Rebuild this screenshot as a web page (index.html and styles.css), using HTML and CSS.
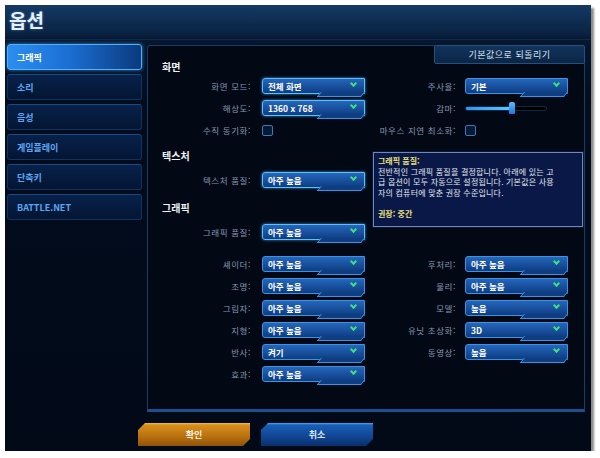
FILE: index.html
```html
<!DOCTYPE html>
<html lang="ko">
<head>
    <meta charset="UTF-8">
    <meta name="viewport" content="width=device-width, initial-scale=1.0">
    <title>옵션</title>
    <link rel="stylesheet" href="styles.css">
</head>
<body>
    <div class="window">
        <div class="titlebar">옵션</div>

        <div class="middle">
            <!-- left menu -->
            <ul class="sidebar">
                <li class="tab active">그래픽</li>
                <li class="tab">소리</li>
                <li class="tab">음성</li>
                <li class="tab">게임플레이</li>
                <li class="tab">단축키</li>
                <li class="tab">BATTLE.NET</li>
            </ul>

            <!-- settings panel -->
            <div class="panel">
                <div class="panel-head">
                    <h2>화면</h2>
                    <button class="reset">기본값으로 되돌리기</button>
                </div>

                <div class="row">
                    <div class="pair">
                        <span class="lbl">화면 모드:</span>
                        <div class="sel glow">전체 화면<i class="chev"></i></div>
                    </div>
                    <div class="pair right">
                        <span class="lbl">주사율:</span>
                        <div class="sel">기본<i class="chev"></i></div>
                    </div>
                </div>
                <div class="row">
                    <div class="pair">
                        <span class="lbl">해상도:</span>
                        <div class="sel glow">1360 x 768<i class="chev"></i></div>
                    </div>
                    <div class="pair right">
                        <span class="lbl">감마:</span>
                        <div class="slider">
                            <div class="track"></div>
                            <div class="thumb"></div>
                        </div>
                    </div>
                </div>
                <div class="row">
                    <div class="pair">
                        <span class="lbl">수직 동기화:</span>
                        <div class="chk"></div>
                    </div>
                    <div class="pair right">
                        <span class="lbl">마우스 지연 최소화:</span>
                        <div class="chk"></div>
                    </div>
                </div>

                <h2 class="section">텍스처</h2>
                <div class="row">
                    <div class="pair">
                        <span class="lbl">텍스처 품질:</span>
                        <div class="sel glow">아주 높음<i class="chev"></i></div>
                    </div>
                </div>

                <h2 class="section graphic">그래픽</h2>
                <div class="row">
                    <div class="pair">
                        <span class="lbl">그래픽 품질:</span>
                        <div class="sel glow">아주 높음<i class="chev"></i></div>
                    </div>
                </div>

                <div class="details">
                    <div class="col">
                        <div class="pair"><span class="lbl">셰이더:</span><div class="sel">아주 높음<i class="chev"></i></div></div>
                        <div class="pair"><span class="lbl">조명:</span><div class="sel">아주 높음<i class="chev"></i></div></div>
                        <div class="pair"><span class="lbl">그림자:</span><div class="sel">아주 높음<i class="chev"></i></div></div>
                        <div class="pair"><span class="lbl">지형:</span><div class="sel">아주 높음<i class="chev"></i></div></div>
                        <div class="pair"><span class="lbl">반사:</span><div class="sel">켜기<i class="chev"></i></div></div>
                        <div class="pair"><span class="lbl">효과:</span><div class="sel">아주 높음<i class="chev"></i></div></div>
                    </div>
                    <div class="col">
                        <div class="pair right"><span class="lbl">후처리:</span><div class="sel">아주 높음<i class="chev"></i></div></div>
                        <div class="pair right"><span class="lbl">물리:</span><div class="sel">아주 높음<i class="chev"></i></div></div>
                        <div class="pair right"><span class="lbl">모델:</span><div class="sel">높음<i class="chev"></i></div></div>
                        <div class="pair right"><span class="lbl">유닛 초상화:</span><div class="sel">3D<i class="chev"></i></div></div>
                        <div class="pair right"><span class="lbl">동영상:</span><div class="sel">높음<i class="chev"></i></div></div>
                    </div>
                </div>

                <!-- hover tooltip for 그래픽 품질 -->
                <div class="tooltip">
                    <div class="tip-title">그래픽 품질:</div>
                    <p>전반적인 그래픽 품질을 결정합니다. 아래에 있는 고<br>급 옵션이 모두 자동으로 설정됩니다. 기본값은 사용<br>자의 컴퓨터에 맞춘 권장 수준입니다.</p>
                    <div class="tip-title">권장: 중간</div>
                </div>
            </div>
        </div>

        <div class="footer">
            <button class="btn ok">확인</button>
            <button class="btn cancel">취소</button>
        </div>
    </div>
</body>
</html>
```

FILE: styles.css
```css
* {
    box-sizing: border-box;
    margin: 0;
    padding: 0;
}

body {
    background-color: #ffffff;
    font-family: "Noto Sans CJK KR", "Noto Sans", sans-serif;
}

.window {
    width: 586px;
    height: 446px;
    margin: 5px 0 0 5px;
    background: linear-gradient(#0b2748 0, #06152c 40px, #020c1d 100px, #020a18 100%);
    box-shadow: 3px 3px 2px rgba(0, 0, 0, 0.45);
    display: flex;
    flex-direction: column;
}

.titlebar {
    height: 35px;
    padding: 1px 0 0 4px;
    font-size: 19px;
    font-weight: 700;
    line-height: 28px;
    color: #e6f0fa;
    text-shadow: 0 0 3px rgba(120, 180, 255, 0.5);
    border-bottom: 1px solid #10294a;
    background: linear-gradient(#143a64, #0b2444 80%, #071a34);
}

.middle {
    display: flex;
    margin-top: 4px;
}

/* left menu */
.sidebar {
    list-style: none;
    width: 137px;
    padding-left: 2px;
    display: flex;
    flex-direction: column;
    gap: 4px;
}

.tab {
    height: 26px;
    padding-left: 9px;
    font-size: 9px;
    font-weight: 700;
    line-height: 25px;
    color: #5ea6f4;
    background: linear-gradient(#08214a, #041532);
    border: 1px solid #0e3466;
    border-top-color: #194a86;
    border-radius: 3px;
}

.tab.active {
    color: #ffffff;
    background: linear-gradient(to right, #2c8ef0 0, #1c6fd4 45%, #0b3a7e 100%);
    border-color: #4fb2ff;
    box-shadow: 0 0 4px rgba(70, 170, 255, 0.7);
}

/* settings panel */
.panel {
    position: relative;
    width: 438px;
    height: 367px;
    margin: 1px 0 0 5px;
    background-color: #020915;
    border: 1px solid #163c68;
    border-bottom: 3px solid #1b4f8e;
    border-radius: 3px 3px 0 0;
}

.panel-head {
    display: flex;
    justify-content: space-between;
    align-items: flex-start;
    height: 29px;
}

h2 {
    height: 14px;
    padding-left: 14px;
    font-size: 10px;
    font-weight: 700;
    line-height: 14px;
    color: #f0f4f8;
}

.panel-head h2 {
    margin-top: 14px;
}

.section {
    margin: 8px 0 6px;
}

.section.graphic {
    margin-top: 10px;
}

.reset {
    width: 151px;
    height: 19px;
    margin: -1px -1px 0 0;
    font-family: inherit;
    font-size: 9px;
    color: #d8e4f0;
    letter-spacing: 0.5px;
    background: linear-gradient(#12335c, #0c2545);
    border: 1px solid #23507f;
    border-radius: 2px;
}

.row {
    display: flex;
    height: 22px;
}

.pair {
    display: flex;
    align-items: center;
    width: 217px;
    height: 22px;
}

.lbl {
    width: 103px;
    margin-right: 11px;
    text-align: right;
    font-size: 8.5px;
    letter-spacing: 0.6px;
    color: #8798b0;
    white-space: nowrap;
}

.pair.right {
    width: 203px;
}

.pair.right .lbl {
    width: 91px;
    margin-right: 9px;
}

/* dropdowns */
.sel {
    position: relative;
    width: 103px;
    height: 16px;
    padding-left: 5px;
    font-size: 8.5px;
    font-weight: 700;
    line-height: 14px;
    color: #ffffff;
    background: linear-gradient(#2566bb, #0e3d82);
    border: 1px solid #3994e6;
    border-radius: 3px 0 0 3px;
}

.sel::after {
    content: "";
    position: absolute;
    right: -1px;
    bottom: -4px;
    width: 42px;
    height: 4px;
    background: #0e3d82;
    border: 1px solid #3994e6;
    border-top: none;
    transform: skewX(-40deg);
    transform-origin: top right;
}

.sel.glow {
    border-color: #58c2ff;
    box-shadow: 0 0 3px rgba(80, 180, 255, 0.8);
}

.chev {
    position: absolute;
    right: 8px;
    top: 2px;
    width: 5px;
    height: 5px;
    border-right: 2px solid #3fe07c;
    border-bottom: 2px solid #3fe07c;
    transform: rotate(45deg);
}

.chk {
    width: 11px;
    height: 11px;
    background-color: #061a36;
    border: 1px solid #3e78b6;
    border-radius: 2px;
}

.slider {
    position: relative;
    flex: none;
    width: 82px;
    height: 12px;
    display: flex;
    align-items: center;
}

.track {
    width: 100%;
    height: 5px;
    border-radius: 2px;
    border: 1px solid #0f2846;
    background: linear-gradient(to right, #2f95f0 0, #62c4ff 56%, #000000 56%);
}

.thumb {
    position: absolute;
    left: 44px;
    top: 0;
    width: 6px;
    height: 12px;
    background: linear-gradient(#5cbcff, #1c78d8);
    border-radius: 2px 2px 1px 1px;
}

.details {
    display: flex;
    margin-top: 10px;
}

.col {
    display: flex;
    flex-direction: column;
}

/* tooltip */
.tooltip {
    position: absolute;
    left: 225px;
    top: 106px;
    width: 210px;
    height: 75px;
    padding: 3px 4px;
    background-color: #0a1847;
    border: 1px solid #7189b8;
    box-shadow: 0 0 0 1px #0a1838;
    font-size: 8px;
    line-height: 10.5px;
    color: #e2e8f0;
}

.tooltip p {
    margin-bottom: 10.5px;
    letter-spacing: 0.2px;
}

.tip-title {
    color: #ece27a;
    font-weight: 700;
}

/* bottom buttons */
.footer {
    display: flex;
    gap: 11px;
    padding: 11px 0 0 133px;
}

.btn {
    width: 112px;
    height: 23px;
    font-family: inherit;
    font-size: 9px;
    font-weight: 700;
    color: #f4f0e0;
    border: none;
    clip-path: polygon(7px 0, 100% 0, 100% calc(100% - 7px), calc(100% - 7px) 100%, 0 100%, 0 7px);
}

.btn.ok {
    background: linear-gradient(#f0c23a 0, #d98e1c 2px, #b8700e 60%, #8f5208 100%);
}

.btn.cancel {
    color: #dce8f8;
    background: linear-gradient(#40b0ff 0, #1a5fb8 2px, #0f4592 60%, #0a2f6c 100%);
}
```
